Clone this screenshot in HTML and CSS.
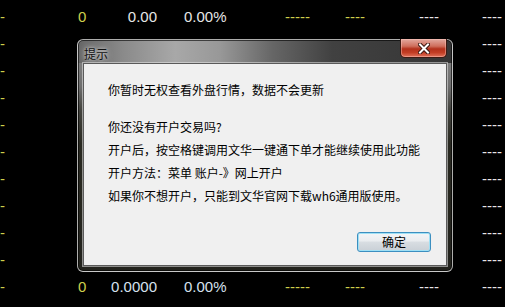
FILE: index.html
```html
<!DOCTYPE html>
<html lang="zh-CN">
<head>
<meta charset="utf-8">
<title>提示</title>
<link rel="stylesheet" href="styles.css">
</head>
<body>
<div class="screen">
  <div class="table">
    <div class="row"><span class="c0 y">-</span><span class="y">0</span><span class="num w">0.00</span><span class="pct w">0.00%</span><span class="d y">-----</span><span class="d y">----</span><span class="d w">----</span><span class="d w">----</span></div>
    <div class="row"><span class="c0 y">-</span><span></span><span></span><span></span><span></span><span></span><span></span><span class="d w">----</span></div>
    <div class="row"><span class="c0 y">-</span><span></span><span></span><span></span><span></span><span></span><span></span><span class="d w">----</span></div>
    <div class="row"><span class="c0 y">-</span><span></span><span></span><span></span><span></span><span></span><span></span><span class="d w">----</span></div>
    <div class="row"><span class="c0 y">-</span><span></span><span></span><span></span><span></span><span></span><span></span><span class="d w">----</span></div>
    <div class="row"><span class="c0 y">-</span><span></span><span></span><span></span><span></span><span></span><span></span><span class="d w">----</span></div>
    <div class="row"><span class="c0 y">-</span><span></span><span></span><span></span><span></span><span></span><span></span><span class="d w">----</span></div>
    <div class="row"><span class="c0 y">-</span><span></span><span></span><span></span><span></span><span></span><span></span><span class="d w">----</span></div>
    <div class="row"><span class="c0 y">-</span><span></span><span></span><span></span><span></span><span></span><span></span><span class="d w">----</span></div>
    <div class="row"><span class="c0 y">-</span><span></span><span></span><span></span><span></span><span></span><span></span><span class="d w">----</span></div>
    <div class="row"><span class="c0 y">-</span><span class="y">0</span><span class="num b">0.0000</span><span class="pct b">0.00%</span><span class="d y">-----</span><span class="d y">----</span><span class="d w">----</span><span class="d w">----</span></div>
  </div>

  <div class="dialog">
    <div class="titlebar">
      <span class="title">提示</span>
      <button class="close" aria-label="关闭">
        <svg width="12" height="11" viewBox="0 0 12 11">
          <path d="M2 1.5 L10 9.5 M10 1.5 L2 9.5" stroke="#3b1710" stroke-width="4" stroke-linecap="square" fill="none"/>
          <path d="M2 1.5 L10 9.5 M10 1.5 L2 9.5" stroke="#ffffff" stroke-width="2" stroke-linecap="square" fill="none"/>
        </svg>
      </button>
    </div>
    <div class="client">
      <p class="msg first">你暂时无权查看外盘行情，数据不会更新</p>
      <p class="msg">你还没有开户交易吗?</p>
      <p class="msg">开户后，按空格键调用文华一键通下单才能继续使用此功能</p>
      <p class="msg">开户方法：菜单 账户-》网上开户</p>
      <p class="msg">如果你不想开户，只能到文华官网下载wh6通用版使用。</p>
      <div class="actions">
        <button class="ok">确定</button>
      </div>
    </div>
  </div>
</div>
</body>
</html>
```

FILE: styles.css
```css
*, *::before, *::after {
  box-sizing: border-box;
}

html, body {
  margin: 0;
  padding: 0;
  background: #000;
}

.screen {
  position: relative;
  width: 505px;
  height: 307px;
  overflow: hidden;
  background: #000;
}

.table {
  padding-top: 3px;
  font-family: "Liberation Sans", Arial, sans-serif;
  font-size: 15px;
}

.row {
  display: grid;
  grid-template-columns: 78px 22px 57px 126px 60px 74px 63px 1fr;
  height: 27px;
  line-height: 27px;
  white-space: nowrap;
}

.c0 {
  padding-left: 0;
}

.num {
  text-align: right;
}

.pct {
  padding-left: 27px;
}

.d {
  padding-left: 2px;
}

.y { color: #cfcf4c; }
.w { color: #e6e6e6; }
.b { color: #d6e0ee; }

/* dialog */
.dialog {
  position: absolute;
  left: 77px;
  top: 39px;
  width: 376px;
  height: 233px;
  border: 1px solid rgba(220, 220, 220, 0.75);
  border-radius: 6px;
  display: flex;
  flex-direction: column;
  padding: 0 5px 5px 5px;
  background:
    linear-gradient(to right, #666 0%, #8a8a8a 12%, #a8a8a8 26%, #989898 38%, #666 52%, #414141 68%, #353535 100%) top left / 100% 23px no-repeat,
    linear-gradient(to bottom, #8c8c8c 0%, #6f6f6f 20%, #454540 30%, #2a2a22 45%, #23231d 100%);
  box-shadow: inset 0 0 0 1px rgba(0, 0, 0, 0.6);
}

.titlebar {
  display: flex;
  align-items: flex-start;
  justify-content: space-between;
  height: 23px;
  flex: none;
}

.title {
  font-family: "Noto Sans CJK SC", sans-serif;
  font-size: 12px;
  line-height: 12px;
  color: #111;
  margin-top: 8px;
  padding-left: 1px;
  text-shadow: 0 0 6px rgba(255, 255, 255, 0.8), 0 0 3px rgba(255, 255, 255, 0.6);
}

.close {
  margin: -1px 0 0 0;
  width: 47px;
  height: 19px;
  padding: 0;
  border: 1px solid #3d1a12;
  border-top: none;
  border-radius: 0 0 5px 5px;
  display: flex;
  align-items: center;
  justify-content: center;
  background:
    linear-gradient(to bottom, #e3aaa0 0%, #cf6e5c 40%, #b3311c 55%, #c23d24 75%, #e0725a 100%);
  box-shadow: inset 0 0 0 1px rgba(255, 200, 190, 0.45);
}

.client {
  flex: 1;
  background: #f0f0f0;
  border: 1px solid #5a5a5a;
  box-shadow: 0 0 0 1px rgba(230, 230, 230, 0.55);
  padding: 15px 0 0 24px;
  display: flex;
  flex-direction: column;
  font-family: "Noto Sans CJK SC", sans-serif;
  font-size: 12px;
  color: #000;
}

.msg {
  margin: 0;
  line-height: 23px;
  white-space: nowrap;
}

.msg.first {
  line-height: 22px;
  margin-bottom: 14px;
}

.actions {
  margin-top: auto;
  display: flex;
  justify-content: flex-end;
  padding: 0 15px 13px 0;
}

.ok {
  width: 74px;
  height: 20px;
  padding: 0;
  border: 1px solid #3c8fc0;
  border-radius: 3px;
  font-family: "Noto Sans CJK SC", sans-serif;
  font-size: 12px;
  line-height: 16px;
  color: #000;
  background: linear-gradient(to bottom, #f3f5f7 0%, #e9ecef 45%, #d8dde2 50%, #c9d0d6 100%);
  box-shadow: inset 0 0 0 1px #9fe0f5;
}
```
